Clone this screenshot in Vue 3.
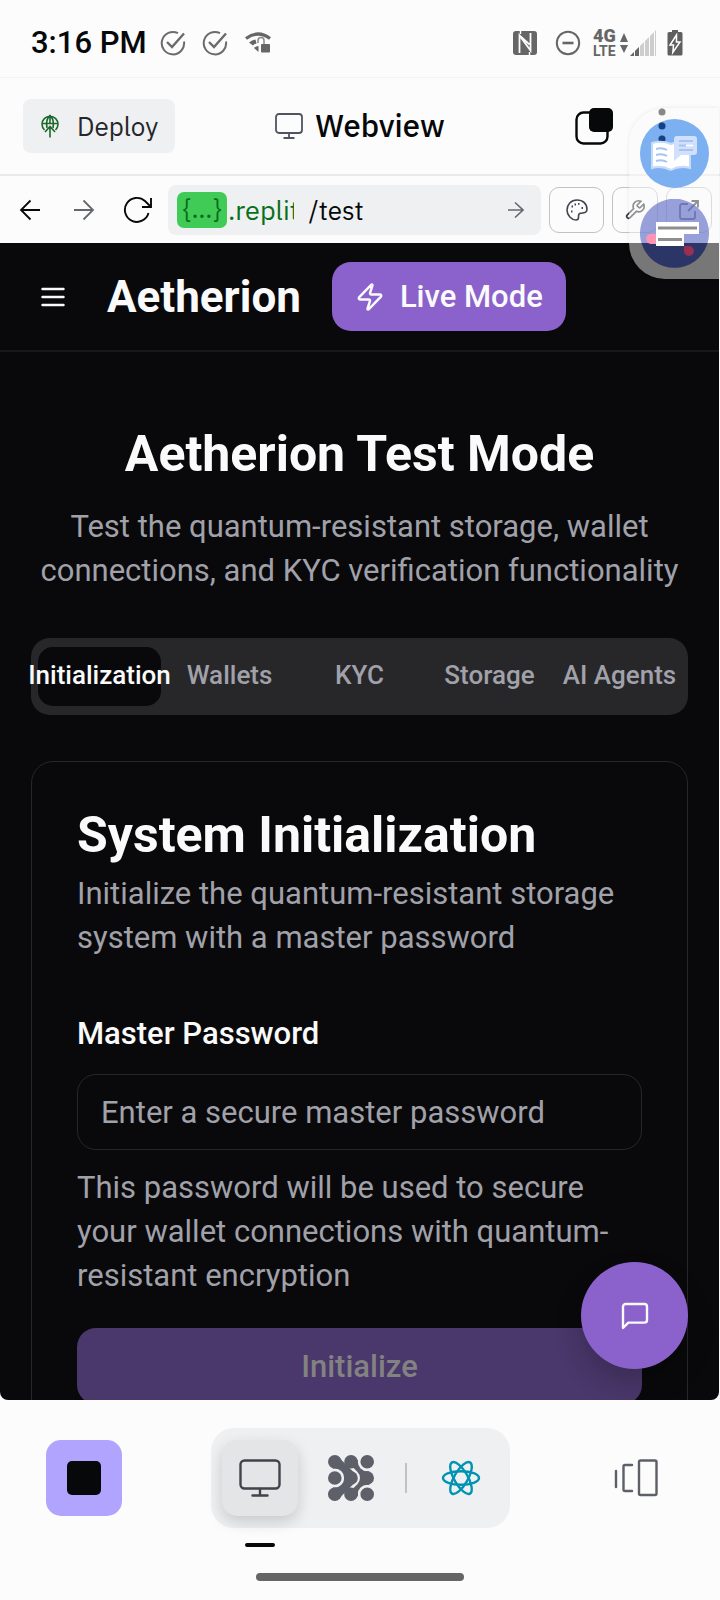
<script setup>
import { ref } from 'vue'

const tabs = ['Initialization', 'Wallets', 'KYC', 'Storage', 'AI Agents']
const activeTab = ref('Initialization')
const password = ref('')
const signalBars = [0, 1, 2, 3, 4]
</script>

<template>
  <div class="screen">
    <header class="status">
      <time class="clock">3:16 PM</time>
      <svg v-for="n in 2" :key="n" class="check" width="26" height="26" viewBox="0 0 26 26" fill="none" stroke="#6b6b6b" stroke-width="2">
        <path d="M18 3.2A11.2 11.2 0 1 0 24 11.5" />
        <path d="M7 12l5 5L24 3.5" stroke-width="2.4" />
      </svg>
      <svg class="wifi" width="28" height="24" viewBox="0 0 28 24">
        <path d="M2 7.500Q14-1.500 26 7.500" fill="none" stroke="#666" stroke-width="3.200" />
        <path d="M5 11.500Q8 9 11.500 8.500L12.500 12.500Q10 13 9 14.500ZM10 17Q12 15 14.500 15v6Z" fill="#666" />
        <path d="M14 12v-2.500a3 3 0 0 1 6 0V14" fill="none" stroke="#888" stroke-width="1.500" />
        <rect x="17" y="13" width="9" height="8.500" rx="1" fill="#666" />
      </svg>
      <span class="spacer"></span>
      <svg class="nfc" width="26" height="26" viewBox="0 0 26 26">
        <rect x="1" y="1" width="24" height="24" rx="3" fill="#666" />
        <path d="M7.500 23V5.500L18.500 20.500V3M7.500 5.500l10 9" fill="none" stroke="#fcfcfc" stroke-width="1.800" />
        <path d="M8.500 1v3M17.500 22v3" stroke="#fcfcfc" stroke-width="1.500" />
      </svg>
      <svg class="dnd" width="26" height="26" viewBox="0 0 26 26" fill="none" stroke="#666">
        <circle cx="13" cy="13" r="11.200" stroke-width="2" />
        <path d="M7.500 13h11" stroke-width="2.600" />
      </svg>
      <span class="network"><b>4G</b><i>LTE</i></span>
      <svg width="10" height="22" viewBox="0 0 10 22" fill="#666">
        <path d="M5 1l4 9H1zM5 21l4-8H1z" />
      </svg>
      <svg class="signal" width="28" height="28" viewBox="0 0 28 28">
        <path d="M1 27L27 1v26z" fill="#cdcdcd" />
        <path d="M1 27L10 18v9z" fill="#666" />
        <path v-for="b in signalBars" :key="b" :d="`M${5.5 + b * 5} 0v28`" stroke="#fcfcfc" stroke-width="1" />
      </svg>
      <svg class="battery" width="16" height="26" viewBox="0 0 16 26">
        <path d="M5 0h6v2h3a1.500 1.500 0 0 1 1.500 1.500V24a1.500 1.500 0 0 1-1.500 1.500H2A1.500 1.500 0 0 1 .5 24V3.500A1.500 1.500 0 0 1 2 2h3z" fill="#5f5f5f" />
        <path d="M9.500 5L3 15h3.500L5.800 22.500 13 12H9.500z" fill="#5f5f5f" stroke="#fff" stroke-width="1.500" />
      </svg>
    </header>

    <section class="appbar">
      <button class="deploy">
        <svg width="18" height="24" viewBox="0 0 18 24" fill="none" stroke="#1c6a2b" stroke-width="1.600">
          <path d="M3.500 16A8 8 0 1 1 14.500 16M1 9.500h16M6 14Q4.500 5 9 1.500 13.500 5 12 14M9 1.500V10" />
          <path d="M9 23.500V13M4 18l5-5.500 5 5.500" />
        </svg>
        Deploy
      </button>
      <h2 class="view-title">
        <svg width="28" height="26" viewBox="0 0 28 26" fill="none" stroke="#50545f" stroke-width="1.800">
          <rect x="1" y="1" width="26" height="19" rx="3" />
          <path d="M14 20v5M8.500 25h11" />
        </svg>
        Webview
      </h2>
      <div class="app-actions">
        <button class="icon-btn" aria-label="Tabs">
          <svg width="38" height="38" viewBox="0 0 38 38">
            <rect x="1.500" y="5.500" width="31" height="31" rx="7" fill="none" stroke="#07080a" stroke-width="2.400" />
            <rect x="14" y="1" width="24" height="24" rx="5" fill="#07080a" />
          </svg>
        </button>
        <button class="icon-btn" aria-label="More">
          <svg width="8" height="36" viewBox="0 0 8 36" fill="#25272c">
            <circle cx="4" cy="4" r="3.500" /><circle cx="4" cy="17.500" r="3.500" /><circle cx="4" cy="30.500" r="3.500" />
          </svg>
        </button>
      </div>
    </section>

    <nav class="toolbar">
      <button class="icon-btn back" aria-label="Back">
        <svg width="22" height="22" viewBox="0 0 22 22" fill="none" stroke="#07080a" stroke-width="1.800"><path d="M21 11H2M11.500 1.500L2 11l9.500 9.500" /></svg>
      </button>
      <button class="icon-btn forward" aria-label="Forward">
        <svg width="22" height="22" viewBox="0 0 22 22" fill="none" stroke="#646770" stroke-width="1.800"><path d="M1 11h19M10.500 1.500L20 11l-9.500 9.500" /></svg>
      </button>
      <button class="icon-btn reload" aria-label="Reload">
        <svg width="30" height="28" viewBox="0 0 30 28" fill="none" stroke="#07080a" stroke-width="1.900"><path d="M25.500 17A12 12 0 1 1 22 5l5.500 5.500M28 2v9h-9" /></svg>
      </button>
      <div class="address">
        <span class="host">{…}</span><span class="domain">.repli<span class="clip">t</span></span>
        <input class="path" value="/test" aria-label="Path" />
        <button class="icon-btn" aria-label="Go">
          <svg width="16" height="18" viewBox="0 0 16 18" fill="none" stroke="#646770" stroke-width="1.600"><path d="M0 9h15M7 1.500L15 9l-8 7.500" /></svg>
        </button>
      </div>
      <button class="tool wide" aria-label="Theme">
        <svg width="22" height="22" viewBox="0 0 22 22" fill="none" stroke="#42454d" stroke-width="1.600">
          <path d="M11 1C5 1 1 5.500 1 11s4.500 10 9 10c1.500 0 2.500-1 2.500-2.500 0-2-.5-4 2-4.200 3-.2 6.500 0 6.500-4C21 5 17 1 11 1Z" />
          <path d="M5.500 7.500h1.500M12 4.800h1.500M15.500 9h1.500M5 12.500h1.500M8.500 5.500H10" stroke-width="1.800" />
        </svg>
      </button>
      <button class="tool" aria-label="Developer tools">
        <svg width="22" height="22" viewBox="0 0 24 24" fill="none" stroke="#35373d" stroke-width="1.800">
          <path d="M14.700 6.300a1 1 0 0 0 0 1.400l1.600 1.600a1 1 0 0 0 1.400 0l3.770-3.770a6 6 0 0 1-7.940 7.940l-6.910 6.910a2.120 2.120 0 0 1-3-3l6.910-6.910a6 6 0 0 1 7.940-7.940z" />
        </svg>
      </button>
      <button class="tool" aria-label="Open in new tab">
        <svg width="20" height="20" viewBox="0 0 20 20" fill="none" stroke="#35373d" stroke-width="1.800">
          <path d="M9 4H3a2 2 0 0 0-2 2v11a2 2 0 0 0 2 2h11a2 2 0 0 0 2-2v-6M12.500 1H19v6.500M19 1L9 11" />
        </svg>
      </button>
    </nav>

    <aside class="edge-panel">
      <svg width="69" height="69" viewBox="0 0 69 69">
        <circle cx="34.500" cy="34.500" r="34.500" fill="#6fa7f0" fill-opacity=".9" />
        <g fill="#124283"><circle cx="22" cy="7" r="3.500" /><circle cx="22" cy="20" r="3.500" /></g>
        <path d="M12 24q10-3 19 1 9-4 19-1v25q-10-3-19 2-10-5-19-2z" fill="#fff" stroke="#c6dafa" stroke-width="2" />
        <path d="M16 30q6-2 11 1M16 36q6-2 11 1M16 42q6-2 11 1" fill="none" stroke="#a5c4f5" stroke-width="2" />
        <path d="M37 17h17q3 0 3 3v13q0 3-3 3H41l-7 6V20q0-3 3-3z" fill="#d1e0fb" />
        <path d="M39 22h14M39 26.500h14M39 31h14" stroke="#a6c3f3" stroke-width="2" />
        <path d="M46 26.500h7" stroke="#fff" stroke-width="2" />
      </svg>
      <svg width="69" height="69" viewBox="0 0 69 69">
        <path d="M1.400 44A34.500 34.500 0 1 1 67.600 44z" fill="#5967c4" fill-opacity=".62" />
        <path d="M1.400 44A34.500 34.500 0 0 0 67.600 44z" fill="#2b3566" />
        <path d="M16 35h-5a5 5 0 0 0 0 10h5z" fill="#ff94b5" />
        <path d="M44 47h5a5 5 0 1 1-5 5z" fill="#973052" />
        <path d="M16 23h43v12H44v12H16z" fill="#fff" />
        <path d="M18 29h39M18 40.500h24" stroke="#8e8e8e" stroke-width="3" />
      </svg>
    </aside>

    <main class="page">
      <header class="site-head">
        <button class="icon-btn menu" aria-label="Menu">
          <svg width="24" height="20" viewBox="0 0 24 20" stroke="#fafafa" stroke-width="2.400" stroke-linecap="round"><path d="M1.500 2h21M1.500 10h21M1.500 18h21" /></svg>
        </button>
        <strong class="brand">Aetherion</strong>
        <button class="live">
          <svg width="30" height="30" viewBox="0 0 24 24" fill="none" stroke="#fafafa" stroke-width="2" stroke-linecap="round" stroke-linejoin="round">
            <path d="M4 14a1 1 0 0 1-.78-1.630l9.900-10.200a.5.5 0 0 1 .86.460l-1.920 6.020A1 1 0 0 0 13 10h7a1 1 0 0 1 .78 1.630l-9.900 10.200a.5.5 0 0 1-.86-.46l1.920-6.020A1 1 0 0 0 11 14z" />
          </svg>
          Live Mode
        </button>
      </header>

      <div class="content">
        <h1>Aetherion Test Mode</h1>
        <p class="lead">Test the quantum-resistant storage, wallet connections, and KYC verification functionality</p>
        <div class="tabs" role="tablist">
          <button v-for="t in tabs" :key="t" role="tab" class="tab" :class="{ active: t === activeTab }" :aria-selected="t === activeTab" @click="activeTab = t">{{ t }}</button>
        </div>
        <form class="card" @submit.prevent>
          <h2>System Initialization</h2>
          <p class="muted">Initialize the quantum-resistant storage system with a master password</p>
          <label for="master">Master Password</label>
          <input id="master" v-model="password" type="password" class="field" placeholder="Enter a secure master password" />
          <p class="muted hint">This password will be used to secure your wallet connections with quantum-resistant encryption</p>
          <button class="submit" disabled>Initialize</button>
        </form>
      </div>
      <button class="chat" aria-label="Chat">
        <svg width="32" height="32" viewBox="0 0 24 24" fill="none" stroke="#fafafa" stroke-width="1.800" stroke-linecap="round" stroke-linejoin="round">
          <path d="M21 15a2 2 0 0 1-2 2H7l-4 4V5a2 2 0 0 1 2-2h14a2 2 0 0 1 2 2z" />
        </svg>
      </button>
    </main>

    <footer class="dock">
      <div class="dock-row">
        <button class="stop" aria-label="Stop"><span></span></button>
        <div class="switcher">
          <button class="pane current" aria-label="Webview">
            <svg width="42" height="38" viewBox="0 0 42 38" fill="none" stroke="#42434b" stroke-width="2.400" stroke-linecap="round">
              <rect x="1.500" y="1.500" width="39" height="28" rx="4" /><path d="M21 30v6.500M13.500 36.500h15" />
            </svg>
          </button>
          <button class="pane" aria-label="Assistant">
            <svg width="46" height="46" viewBox="0 0 46 46" fill="#5d6069">
              <g fill="none" stroke-linejoin="round">
                <path d="M23 7L39 23L23 39" stroke="#5d6069" stroke-width="12" />
                <path d="M7 7L23 23L7 39" stroke="#eff0f2" stroke-width="18" />
                <path d="M7 7L23 23L7 39" stroke="#5d6069" stroke-width="12" />
              </g>
              <g stroke="#eff0f2" stroke-width="2.600">
                <circle cx="6.800" cy="23" r="8.100" /><circle cx="39.200" cy="6.800" r="8.100" /><circle cx="39.200" cy="39.200" r="8.100" />
              </g>
              <circle cx="6.800" cy="6.800" r="6.800" /><circle cx="23" cy="6.800" r="6.800" /><circle cx="23" cy="39.200" r="6.800" />
              <circle cx="6.800" cy="39.200" r="6.800" /><circle cx="23" cy="23" r="6.800" /><circle cx="39.200" cy="23" r="6.800" />
            </svg>
          </button>
          <span class="divider"></span>
          <button class="pane" aria-label="React">
            <svg width="40" height="40" viewBox="0 0 40 40" fill="none" stroke="#0093b3" stroke-width="2.400">
              <ellipse cx="20" cy="20" rx="18" ry="6.800" />
              <ellipse cx="20" cy="20" rx="18" ry="6.800" transform="rotate(60 20 20)" />
              <ellipse cx="20" cy="20" rx="18" ry="6.800" transform="rotate(120 20 20)" />
            </svg>
          </button>
        </div>
        <button class="icon-btn panes" aria-label="All panes">
          <svg width="44" height="38" viewBox="0 0 44 38" fill="none" stroke="#5d6069" stroke-width="2.400" stroke-linecap="round">
            <path d="M2 12v16M18 6h-7q-1.500 0-1.500 1.500v23Q9.500 32 11 32h7" /><rect x="25" y="1.500" width="17.500" height="34.500" rx="1.500" />
          </svg>
        </button>
      </div>
      <span class="marker"></span>
      <span class="home"></span>
    </footer>
  </div>
</template>

<style>
body { margin: 0; background: #fcfcfc; }
</style>

<style scoped>
* { box-sizing: border-box; }
.screen {
  position: relative;
  display: flex;
  flex-direction: column;
  height: 100vh;
  overflow: hidden;
  background: #fcfcfc;
  font-family: Roboto, "Liberation Sans", sans-serif;
  color: #07080a;
}
button, input { font: inherit; color: inherit; margin: 0; }
button { border: 0; padding: 0; background: none; cursor: pointer; }
svg { display: block; flex: none; }
h1, h2, p { margin: 0; }
.icon-btn { display: flex; align-items: center; justify-content: center; flex: none; }

.status { display: flex; align-items: center; height: 78px; padding: 8px 37px 0 31px; border-bottom: 1px solid #f4f4f4; }
.clock { font-size: 31px; font-weight: 500; margin-right: 13px; }
.check { margin-right: 16px; }
.spacer { flex: 1; }
.nfc { margin-right: 17px; }
.dnd { margin-right: 12px; }
.network { display: flex; flex-direction: column; width: 26px; color: #666; font-weight: 700; font-size: 18px; line-height: 16px; }
.network i { font-style: normal; font-size: 14px; line-height: 14px; }
.signal { margin-right: 10px; }

.appbar { display: grid; grid-template-columns: 1fr auto 1fr; align-items: center; height: 98px; padding: 0 23px; border-bottom: 2px solid #e9e9ea; }
.deploy, .view-title, .address, .path { font-family: "IBM Plex Sans", "Noto Sans", sans-serif; }
.deploy { justify-self: start; display: flex; align-items: center; gap: 18px; height: 54px; padding: 0 17px 0 18px; border-radius: 8px; background: #eff0f2; font-size: 26px; color: #25272c; }
.view-title { display: flex; align-items: center; gap: 12px; font-size: 31px; line-height: 40px; font-weight: 500; }
.app-actions { display: flex; justify-content: flex-end; gap: 45px; padding-right: 31px; }

.toolbar { display: flex; align-items: center; height: 67px; padding: 0 8px 0 19px; }
.back { margin-right: 32px; }
.forward { margin-right: 28px; }
.reload { margin-right: 15px; }
.address { display: flex; flex: 1; align-items: center; min-width: 0; height: 50px; padding: 0 17px 0 9px; border-radius: 8px; background: #eff0f2; font-size: 26px; }
.host { width: 50px; height: 36px; line-height: 33px; text-align: center; border-radius: 7px; background: #3fcb56; color: #0b6b1c; }
.domain { display: flex; padding-left: 1px; font-size: 27px; color: #087018; }
.clip { width: 4px; overflow: hidden; }
.path { flex: 1; min-width: 0; border: 0; padding: 0 0 0 15px; background: none; outline: 0; }
.tool { display: flex; align-items: center; justify-content: center; flex: none; width: 46px; height: 46px; margin-left: 8px; border: 1px solid #c0c2c6; border-radius: 10px; }
.tool.wide { width: 55px; }

.edge-panel { position: absolute; z-index: 3; top: 108px; right: 1px; display: flex; flex-direction: column; gap: 11px; padding: 11px 10px 11px 11px; border-radius: 36px 0 0 36px; background: rgba(250, 250, 250, .46); box-shadow: 0 0 4px rgba(0, 0, 0, .08); }

.page { position: relative; flex: 1; min-height: 0; margin-right: 1px; overflow: hidden; background: #09090b; color: #fafafa; border-radius: 0 0 8px 8px; }
.site-head { display: flex; align-items: center; height: 109px; padding: 0 41px; border-bottom: 2px solid #18181b; }
.brand { margin: 0 31px 0 42px; font-size: 44px; font-weight: 700; }
.live { display: flex; align-items: center; gap: 15px; height: 69px; padding: 0 23px; border-radius: 19px; background: #8b62cc; font-size: 31px; font-weight: 500; }
.content { padding: 70px 31px 0; }
h1 { text-align: center; font-size: 50px; line-height: 64px; font-weight: 700; }
.lead { margin-top: 19px; text-align: center; font-size: 31px; line-height: 44px; color: #a1a1aa; }
.tabs { display: grid; grid-template-columns: repeat(5, minmax(0, 1fr)); gap: 7px; margin-top: 45px; height: 77px; padding: 9px 7px; border-radius: 19px; background: #27272a; }
.tab { display: flex; justify-content: center; align-items: center; white-space: nowrap; padding-bottom: 4px; border-radius: 15px; font-size: 26px; font-weight: 500; color: #a1a1aa; }
.tab.active { background: #09090b; color: #fafafa; }
.card { margin-top: 46px; padding: 44px 45px; border: 1px solid #27272a; border-radius: 22px; }
.card h2 { font-size: 50px; line-height: 58px; font-weight: 700; }
.muted { font-size: 31px; line-height: 44px; color: #a1a1aa; }
.card h2 + .muted { margin-top: 8px; }
.card label { display: block; margin-top: 56px; font-size: 31px; line-height: 36px; font-weight: 500; }
.field { display: block; width: 100%; height: 76px; margin-top: 22px; padding: 0 23px; border: 1px solid #27272a; border-radius: 19px; background: none; font-size: 31px; outline: 0; }
.field::placeholder { color: #a1a1aa; opacity: 1; }
.hint { margin-top: 16px; }
.submit { display: block; width: 100%; height: 76px; margin-top: 30px; border-radius: 19px; background: #4a376b; color: #828282; font-size: 31px; font-weight: 500; }
.chat { position: absolute; right: 31px; bottom: 31px; display: flex; align-items: center; justify-content: center; width: 107px; height: 107px; border-radius: 50%; background: #8b62cc; box-shadow: 0 14px 28px rgba(0, 0, 0, .2); }

.dock { display: flex; flex-direction: column; padding: 28px 46px 0; height: 200px; }
.dock-row { display: grid; grid-template-columns: 1fr auto 1fr; align-items: center; }
.stop { display: flex; align-items: center; justify-content: center; width: 76px; height: 76px; border-radius: 15px; background: #b1a4ff; }
.stop span { width: 34px; height: 34px; border-radius: 5px; background: #07080a; }
.switcher { display: flex; align-items: center; height: 100px; padding: 0 11px; border-radius: 23px; background: #eff0f2; }
.pane { display: flex; align-items: center; justify-content: center; width: 76px; height: 76px; border-radius: 15px; }
.current { background: #e4e5e7; box-shadow: 0 6px 15px rgba(0, 0, 0, .16); margin-right: 15px; }
.divider { width: 2px; height: 30px; margin: 0 16px; background: #c0c2c4; }
.panes { justify-self: end; margin-right: 16px; }
.marker { width: 30px; height: 4px; margin: 15px 0 0 199px; border-radius: 2px; background: #07080a; }
.home { align-self: center; width: 208px; height: 8px; margin-top: 26px; border-radius: 4px; background: #666; }
</style>
